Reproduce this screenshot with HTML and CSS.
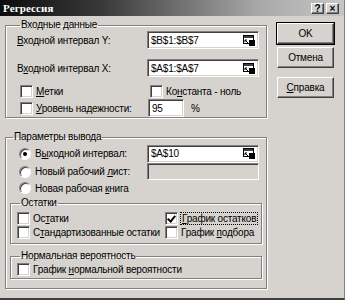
FILE: index.html
```html
<!DOCTYPE html>
<html lang="ru">
<head>
    <meta charset="UTF-8">
    <title>Регрессия</title>
    <link rel="stylesheet" href="styles.css">
</head>
<body>
    <div class="window">
        <div class="titlebar">
            <span class="title">Регрессия</span>
            <div class="title-btns">
                <span class="tbtn">?</span>
                <span class="tbtn">×</span>
            </div>
        </div>
        <div class="client">
            <div class="main">
                <fieldset class="group group-input">
                    <legend>Входные данные</legend>
                    <div class="field-row">
                        <span class="label"><u>В</u>ходной интервал Y:</span>
                        <div class="ref-input">
                            <span>$B$1:$B$7</span>
                            <svg class="ref-icon" width="12" height="11" viewBox="0 0 12 11"><rect x="0.5" y="0.5" width="10" height="8" fill="#fff" stroke="#000"/><rect x="1" y="1" width="9" height="2" fill="#404040"/><rect x="6" y="5" width="6" height="6" fill="#000"/><path d="M2 5 L5 8 M2 5 L2 7 M2 5 L4 5" stroke="#000" fill="none"/></svg>
                        </div>
                    </div>
                    <div class="field-row row-gap">
                        <span class="label">В<u>х</u>одной интервал X:</span>
                        <div class="ref-input">
                            <span>$A$1:$A$7</span>
                            <svg class="ref-icon" width="12" height="11" viewBox="0 0 12 11"><rect x="0.5" y="0.5" width="10" height="8" fill="#fff" stroke="#000"/><rect x="1" y="1" width="9" height="2" fill="#404040"/><rect x="6" y="5" width="6" height="6" fill="#000"/><path d="M2 5 L5 8 M2 5 L2 7 M2 5 L4 5" stroke="#000" fill="none"/></svg>
                        </div>
                    </div>
                    <div class="check-grid">
                        <div class="check"><span class="box"></span><span><u>М</u>етки</span></div>
                        <div class="check"><span class="box"></span><span>Ко<u>н</u>станта - ноль</span></div>
                    </div>
                    <div class="check-grid level-row">
                        <div class="check"><span class="box"></span><span><u>У</u>ровень надежности:</span></div>
                        <div class="level">
                            <span class="text-input small">95</span>
                            <span class="pct">%</span>
                        </div>
                    </div>
                </fieldset>

                <fieldset class="group group-output">
                    <legend>Параметры вывода</legend>
                    <div class="radio-row first">
                        <div class="radio-label"><span class="radio checked"></span><span>В<u>ы</u>ходной интервал:</span></div>
                        <div class="ref-input">
                            <span>$A$10</span>
                            <svg class="ref-icon" width="12" height="11" viewBox="0 0 12 11"><rect x="0.5" y="0.5" width="10" height="8" fill="#fff" stroke="#000"/><rect x="1" y="1" width="9" height="2" fill="#404040"/><rect x="6" y="5" width="6" height="6" fill="#000"/><path d="M2 5 L5 8 M2 5 L2 7 M2 5 L4 5" stroke="#000" fill="none"/></svg>
                        </div>
                    </div>
                    <div class="radio-row">
                        <div class="radio-label"><span class="radio"></span><span>Новый рабочий <u>л</u>ист:</span></div>
                        <div class="ref-input disabled"></div>
                    </div>
                    <div class="radio-row last">
                        <div class="radio-label"><span class="radio"></span><span>Новая рабочая <u>к</u>нига</span></div>
                    </div>

                    <fieldset class="subgroup sub-resid">
                        <legend>Остатки</legend>
                        <div class="sub-grid">
                            <div class="check"><span class="box"></span><span>Ос<u>т</u>атки</span></div>
                            <div class="check"><span class="box checked"></span><span class="focus"><u>Г</u>рафик остатков</span></div>
                            <div class="check"><span class="box"></span><span>С<u>т</u>андартизованные остатки</span></div>
                            <div class="check"><span class="box"></span><span>График <u>п</u>одбора</span></div>
                        </div>
                    </fieldset>

                    <fieldset class="subgroup sub-normal">
                        <legend>Нормальная вероятность</legend>
                        <div class="check"><span class="box"></span><span>График <u>н</u>ормальной вероятности</span></div>
                    </fieldset>
                </fieldset>
            </div>

            <div class="buttons">
                <button class="btn default">OK</button>
                <button class="btn">Отмена</button>
                <button class="btn help"><u>С</u>правка</button>
            </div>
        </div>
    </div>
</body>
</html>
```

FILE: styles.css
```css
body {
    margin: 0;
    padding: 0;
    background-color: #d6d3ce;
    font-family: "Liberation Sans", Arial, sans-serif;
    font-size: 10px;
    letter-spacing: -0.2px;
    color: #000;
}

u {
    text-decoration: underline;
    text-underline-offset: 1px;
}

.window {
    width: 345px;
    height: 300px;
    box-sizing: border-box;
    background-color: #d6d3ce;
    border-bottom: 2px solid #404040;
    border-right: 1px solid #808080;
}

.titlebar {
    height: 16px;
    display: flex;
    align-items: center;
    justify-content: space-between;
    padding: 0 5px 0 3px;
    background: linear-gradient(to right, #0c0c0c 0%, #3a3a3a 30%, #a8a8a8 75%, #c6c6c6 100%);
}

.title {
    color: #fff;
    font-family: "Liberation Serif", serif;
    font-weight: bold;
    font-size: 11px;
    letter-spacing: 0.1px;
}

.title-btns {
    display: flex;
    gap: 2px;
}

.tbtn {
    width: 13px;
    height: 11px;
    box-sizing: border-box;
    background: #d6d3ce;
    border: 1px solid;
    border-color: #fff #404040 #404040 #fff;
    box-shadow: inset -1px -1px 0 #808080;
    font-size: 10px;
    font-weight: bold;
    line-height: 9px;
    text-align: center;
    letter-spacing: 0;
}

.client {
    display: flex;
    padding: 3px 0 0 5px;
}

.main {
    width: 262px;
}

/* group boxes */
.group, .subgroup {
    margin: 0;
    min-width: 0;
    border: 1px solid #808080;
    box-shadow: 1px 1px 0 #fff, inset 1px 1px 0 #fff;
}

.group legend, .subgroup legend {
    padding: 0 1px;
    margin-left: 3px;
    line-height: 12px;
}

.group-input {
    padding: 0 7px 0 11px;
    height: 99px;
    box-sizing: border-box;
}

.group-output {
    margin-top: 13px;
    padding: 0 4px 0 4px;
    height: 158px;
    box-sizing: border-box;
}

.field-row {
    display: flex;
    align-items: center;
    justify-content: space-between;
    height: 18px;
}

.row-gap {
    margin-top: 10px;
}

.ref-input, .text-input {
    box-sizing: border-box;
    height: 18px;
    background: #fff;
    border: 1px solid;
    border-color: #808080 #fff #fff #808080;
    box-shadow: inset 1px 1px 0 #404040, inset -1px -1px 0 #d6d3ce;
    display: flex;
    align-items: center;
    padding: 0 3px;
}

.ref-input {
    width: 112px;
    justify-content: space-between;
}

.ref-input.disabled {
    background: #d6d3ce;
    height: 17px;
}

.ref-icon {
    display: block;
}

.check-grid {
    display: grid;
    grid-template-columns: 131px 1fr;
    margin-top: 7px;
    height: 14px;
    align-items: center;
}

.level-row {
    margin-top: 1px;
    height: 18px;
}

.check {
    display: flex;
    align-items: center;
    height: 14px;
    white-space: nowrap;
}

.check-grid .check {
    padding-left: 3px;
}

.check-grid .check + .check {
    padding-left: 2px;
}

.box {
    width: 13px;
    height: 13px;
    box-sizing: border-box;
    background: #fff;
    border: 1px solid;
    border-color: #808080 #fff #fff #808080;
    box-shadow: inset 1px 1px 0 #404040, inset -1px -1px 0 #d6d3ce;
    margin-right: 3px;
    flex-shrink: 0;
    position: relative;
}

.box.checked::after {
    content: "";
    position: absolute;
    left: 3px;
    top: 1px;
    width: 3px;
    height: 6px;
    border: solid #000;
    border-width: 0 2px 2px 0;
    transform: rotate(40deg);
}

.level {
    display: flex;
    align-items: center;
}

.text-input.small {
    width: 36px;
}

.pct {
    margin-left: 7px;
}

.focus {
    outline: 1px dotted #000;
    outline-offset: 0;
    padding: 0 1px;
}

/* radio rows */
.radio-row {
    display: flex;
    align-items: center;
    justify-content: space-between;
    height: 17px;
    margin-top: 1px;
    padding: 0 3px 0 9px;
}

.radio-row.first {
    margin-top: 2px;
}

.radio-row.last {
    height: 14px;
}

.radio-label {
    display: flex;
    align-items: center;
}

.radio {
    width: 12px;
    height: 12px;
    box-sizing: border-box;
    border-radius: 50%;
    background: #fff;
    border: 1px solid;
    border-color: #808080 #fff #fff #808080;
    box-shadow: inset 1px 1px 0 #404040;
    margin-right: 4px;
    position: relative;
}

.radio.checked::after {
    content: "";
    position: absolute;
    left: 3px;
    top: 3px;
    width: 4px;
    height: 4px;
    border-radius: 50%;
    background: #000;
}

.subgroup {
    padding: 0 4px 0 6px;
    box-sizing: border-box;
}

.sub-resid {
    margin-top: 2px;
    height: 47px;
}

.sub-grid {
    display: grid;
    grid-template-columns: 148px 1fr;
    margin-top: 2px;
}

.sub-normal {
    margin-top: 6px;
    height: 29px;
}

/* buttons */
.buttons {
    display: flex;
    flex-direction: column;
    margin-left: 10px;
    padding-top: 4px;
}

.btn {
    width: 57px;
    height: 21px;
    margin: 0 0 3px 0;
    padding: 0;
    font-family: "Liberation Sans", Arial, sans-serif;
    font-size: 10px;
    letter-spacing: -0.2px;
    color: #000;
    background: #d6d3ce;
    border: 1px solid;
    border-color: #fff #404040 #404040 #fff;
    box-shadow: inset -1px -1px 0 #808080;
}

.btn.default {
    outline: 1px solid #000;
    outline-offset: 0;
}

.btn.help {
    margin-top: 6px;
}
```
